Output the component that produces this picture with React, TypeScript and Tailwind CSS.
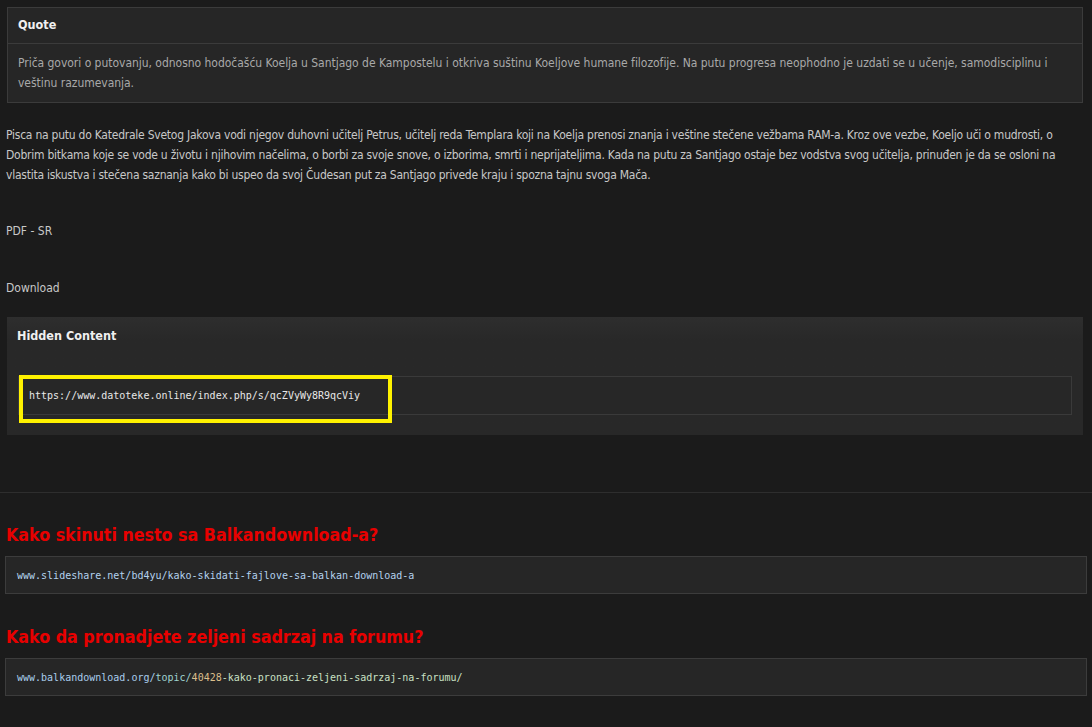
const body = "font-['DejaVu_Sans_Condensed','DejaVu_Sans',sans-serif]";
const mono = "font-['DejaVu_Sans_Mono',monospace]";

function CodeBox({ children }: { children: React.ReactNode }) {
  return (
    <div className={`mx-[5px] flex h-[38px] items-center border border-[#3c3c3c] bg-[#262626] px-[11px] text-[10px] ${mono}`}>
      {children}
    </div>
  );
}

export default function App() {
  return (
    <div className={`min-h-[727px] w-[1092px] bg-[#1b1b1b] pt-[7px] text-[12px] text-[#cfcfcf] ${body}`}>
      {/* quote */}
      <div className="mx-[7px] w-[1076px] border border-[#3b3b3b] bg-[#262626]">
        <div className="flex h-[36px] items-center border-b border-[#3b3b3b] px-[10px] text-[12.5px] font-bold text-[#f0f0f0]">Quote</div>
        <div className="px-[10px] pb-[9px] pt-[9px] leading-[20px] tracking-[-0.03px] text-[#a9a9a9]">
          Priča govori o putovanju, odnosno hodočašću Koelja u Santjago de Kampostelu i otkriva suštinu Koeljove humane filozofije. Na putu progresa neophodno je uzdati se u učenje, samodisciplinu i veštinu razumevanja.
        </div>
      </div>

      <p className="mt-[22px] pl-[6px] pr-[4px] leading-[20px] tracking-[-0.24px] text-[#c8c8c8]">
        Pisca na putu do Katedrale Svetog Jakova vodi njegov duhovni učitelj Petrus, učitelj reda Templara koji na Koelja prenosi znanja i veštine stečene vežbama RAM-a. Kroz ove vezbe, Koeljo uči o mudrosti, o Dobrim bitkama koje se vode u životu i njihovim načelima, o borbi za svoje snove, o izborima, smrti i neprijateljima. Kada na putu za Santjago ostaje bez vodstva svog učitelja, prinuđen je da se osloni na vlastita iskustva i stečena saznanja kako bi uspeo da svoj Čudesan put za Santjago privede kraju i spozna tajnu svoga Mača.
      </p>

      <p className="mt-[36px] px-[6px] leading-[20px] text-[#c8c8c8]">PDF - SR</p>
      <p className="mt-[37px] px-[6px] leading-[20px] text-[#c8c8c8]">Download</p>

      {/* hidden content */}
      <div className="mx-[7px] mt-[19px] h-[118px] w-[1076px] bg-gradient-to-b from-[#2e2e2e] to-[#282828] to-[20%]">
        <div className="flex h-[38px] items-center px-[10px] text-[12.5px] font-bold text-[#f0f0f0]">Hidden Content</div>
        <div className="relative mx-[11px] mt-[21px] flex h-[39px] items-center border border-[#3a3a3a] bg-[#272727] px-[10px] text-[10px] text-[#e8e8e8]">
          <span className={mono}>https://www.datoteke.online/index.php/s/qcZVyWy8R9qcViy</span>
          <div className="absolute left-[0px] top-[-2px] h-[48px] w-[373px] border-[4px] border-[#fff200]" />
        </div>
      </div>

      <div className="mt-[57px] h-px bg-[#2e2e2e]" />

      <h2 className="mt-[30px] px-[6px] text-[17.7px] font-bold leading-[25px] text-[#e80000]">Kako skinuti nesto sa Balkandownload-a?</h2>
      <div className="mt-[8px]">
        <CodeBox>
          <span className="text-[#b4d2ee]">www.slideshare.net/bd4yu/kako-skidati-fajlove-sa-balkan-download-a</span>
        </CodeBox>
      </div>

      <h2 className="mt-[31px] px-[6px] text-[17.7px] font-bold leading-[25px] text-[#e80000]">Kako da pronadjete zeljeni sadrzaj na forumu?</h2>
      <div className="mt-[8px]">
        <CodeBox>
          <span className="text-[#a9cdec]">www.balkandownload.org/</span>
          <span className="text-[#9fd3d0]">topic/</span>
          <span className="text-[#dcbf8c]">40428</span>
          <span className="text-[#c9e0c4]">-kako-pronaci-zeljeni-sadrzaj-na-forumu/</span>
        </CodeBox>
      </div>
    </div>
  );
}
